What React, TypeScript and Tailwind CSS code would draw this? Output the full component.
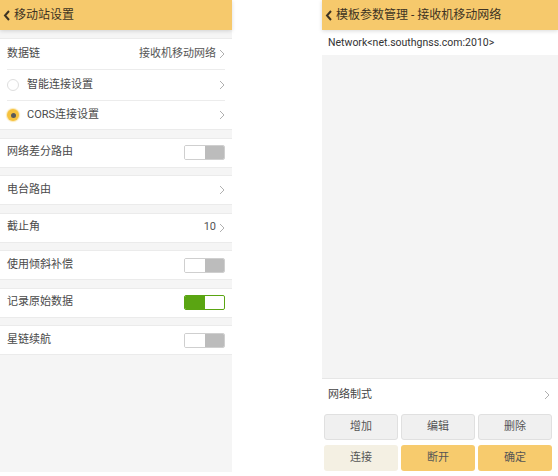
import React from "react";

const font = { fontFamily: 'Roboto, "Noto Sans CJK SC", sans-serif' };

function Chevron({ className = "" }: { className?: string }) {
  return (
    <svg width="6" height="10" viewBox="0 0 6 10" className={className}>
      <polyline points="1,1 5,5 1,9" fill="none" stroke="#b0b0b0" strokeWidth="1" />
    </svg>
  );
}

function BackIcon() {
  return (
    <svg width="8" height="11" viewBox="0 0 8 11" className="shrink-0">
      <polyline points="6,1 2,5.5 6,10" fill="none" stroke="#3d3323" strokeWidth="2" />
    </svg>
  );
}

function Toggle({ on }: { on?: boolean }) {
  if (on) {
    return (
      <div className="flex h-[15px] w-[41px] rounded-[2px] border border-[#5aa512] overflow-hidden">
        <div className="flex-1 bg-[#5aa512]" />
        <div className="flex-1 bg-white rounded-[2px]" />
      </div>
    );
  }
  return (
    <div className="flex h-[15px] w-[41px] rounded-[2px] border border-[#cfcfcf] overflow-hidden">
      <div className="flex-1 bg-white" />
      <div className="flex-1 bg-[#bcbcbc]" />
    </div>
  );
}

function Row({
  label,
  right,
  tall,
}: {
  label: React.ReactNode;
  right?: React.ReactNode;
  tall?: boolean;
}) {
  return (
    <div className={`flex items-center justify-between px-[7px] bg-white ${tall ? "h-[30px]" : "h-[28px]"}`}>
      <div className="flex items-center text-[11px] text-[#4a4a4a]">{label}</div>
      <div className="flex items-center gap-[3px] text-[11px] text-[#555]">{right}</div>
    </div>
  );
}

function Radio({ checked }: { checked?: boolean }) {
  if (checked) {
    return (
      <div className="w-[12px] h-[12px] rounded-full bg-[#f6c23e] flex items-center justify-center mr-[8px] shadow-[0_0_1px_1px_rgba(246,194,62,0.4)]">
        <div className="w-[5px] h-[5px] rounded-full bg-[#5a5a5a]" />
      </div>
    );
  }
  return <div className="w-[12px] h-[12px] rounded-full bg-white border border-[#dedede] mr-[8px]" />;
}

function Group({ children }: { children: React.ReactNode }) {
  return <div className="mt-[7.5px] border-y border-[#ebebeb] bg-white">{children}</div>;
}

function LeftScreen() {
  return (
    <div className="w-[232px] h-[472px] bg-[#f5f5f5] flex flex-col shrink-0">
      <div className="h-[30px] shrink-0 bg-[#f6c96c] flex items-center pl-[3px] gap-[3px] shadow-[0_1px_4px_rgba(0,0,0,0.15)] relative z-10">
        <BackIcon />
        <span className="text-[12px] text-[#3d3323]">移动站设置</span>
      </div>
      <div className="mt-[8px] bg-white border-y border-[#ebebeb]">
        <Row tall label="数据链" right={<><span>接收机移动网络</span><Chevron /></>} />
        <div className="mx-[7px] h-px bg-[#ececec]" />
        <Row tall label={<><Radio /><span>智能连接设置</span></>} right={<Chevron />} />
        <div className="mx-[7px] h-px bg-[#ececec]" />
        <Row label={<><Radio checked /><span>CORS连接设置</span></>} right={<Chevron />} />
      </div>
      <Group>
        <Row label="网络差分路由" right={<Toggle />} />
      </Group>
      <Group>
        <Row label="电台路由" right={<Chevron />} />
      </Group>
      <Group>
        <Row label="截止角" right={<><span>10</span><Chevron /></>} />
      </Group>
      <Group>
        <Row label="使用倾斜补偿" right={<Toggle />} />
      </Group>
      <Group>
        <Row label="记录原始数据" right={<Toggle on />} />
      </Group>
      <Group>
        <Row label="星链续航" right={<Toggle />} />
      </Group>
    </div>
  );
}

function Btn({ children, tone }: { children: React.ReactNode; tone: "gray" | "cream" | "yellow" }) {
  const cls =
    tone === "gray"
      ? "bg-[#f0f0f0] border border-[#e0e0e0]"
      : tone === "cream"
      ? "bg-[#f4f0e3]"
      : "bg-[#f7cb6d]";
  return (
    <div className={`h-[26px] rounded-[3px] flex items-center justify-center text-[11px] text-[#555] ${cls}`}>
      {children}
    </div>
  );
}

function RightScreen() {
  return (
    <div className="flex-1 h-[476px] bg-white flex flex-col">
      <div className="h-[30px] shrink-0 bg-[#f6c96c] flex items-center pl-[3px] gap-[3px] shadow-[0_1px_4px_rgba(0,0,0,0.15)] relative z-10">
        <BackIcon />
        <span className="text-[12px] text-[#3d3323]">模板参数管理 - 接收机移动网络</span>
      </div>
      <div className="h-[25px] shrink-0 flex items-center pl-[6px] text-[10.5px] text-[#333] bg-white">
        Network&lt;net.southgnss.com:2010&gt;
      </div>
      <div className="flex-1 bg-[#f4f4f4]" />
      <div className="h-[33px] shrink-0 border-t border-[#e6e6e6] flex items-center justify-between pl-[6px] pr-[8px] text-[11px] text-[#444]">
        <span>网络制式</span>
        <Chevron />
      </div>
      <div className="grid grid-cols-3 gap-x-[3px] gap-y-[5px] pl-[2px] pr-[6px] pt-[3px] pb-[5px]">
        <Btn tone="gray">增加</Btn>
        <Btn tone="gray">编辑</Btn>
        <Btn tone="gray">删除</Btn>
        <Btn tone="cream">连接</Btn>
        <Btn tone="yellow">断开</Btn>
        <Btn tone="yellow">确定</Btn>
      </div>
    </div>
  );
}

export default function App() {
  return (
    <div className="w-[558px] h-[476px] bg-white flex overflow-hidden" style={font}>
      <LeftScreen />
      <div className="w-[90px] shrink-0" />
      <RightScreen />
    </div>
  );
}
